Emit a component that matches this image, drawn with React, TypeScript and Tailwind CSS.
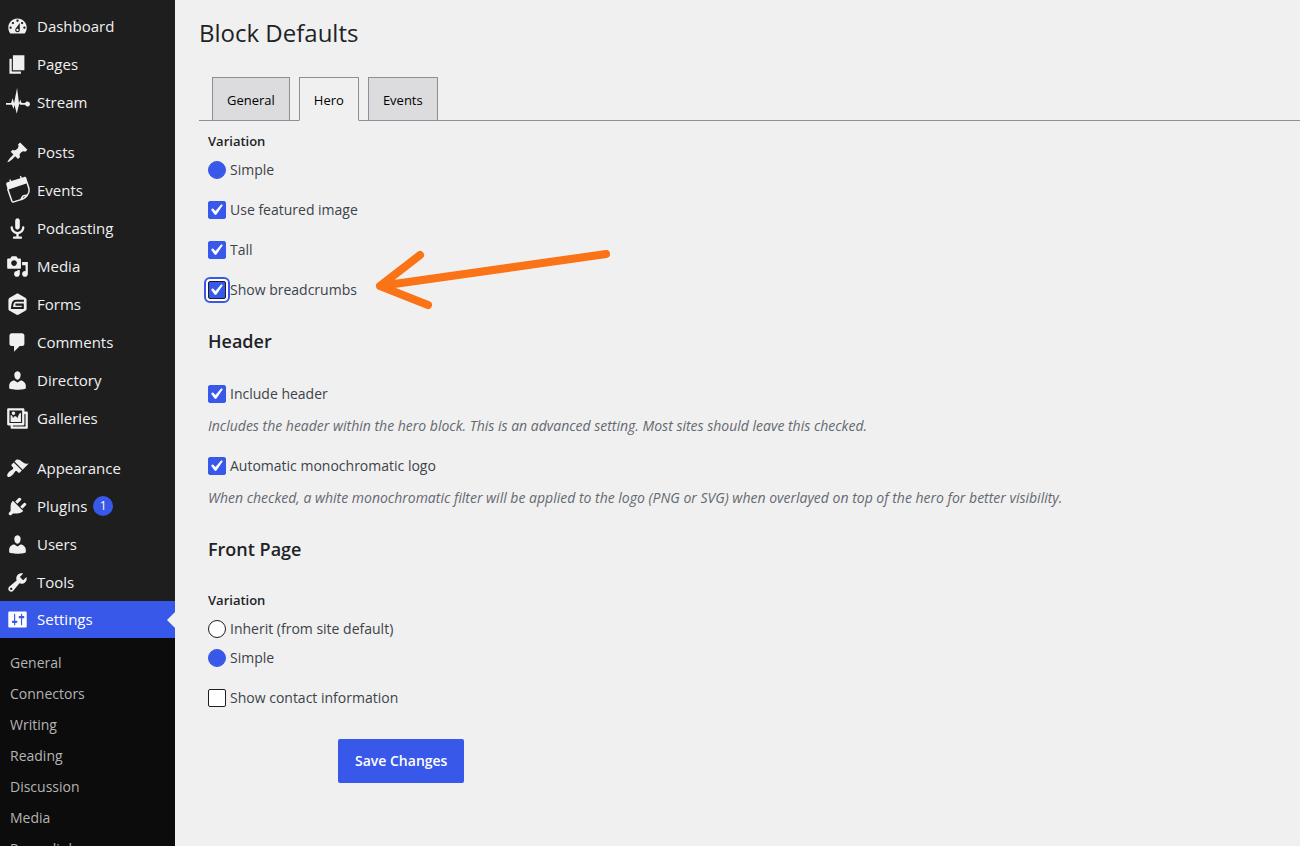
import { useId } from "react";
import clsx from "clsx";

interface MenuItem {
  label: string;
  icon: React.ReactNode;
  badge?: number;
  current?: boolean;
}

const glyph = (d: string) => <path fillRule="evenodd" d={d} />;

const usersGlyph = glyph(
  "M10 9.25c-2.27 0-2.73-3.44-2.73-3.44C7 4.02 7.82 2 9.97 2c2.16 0 2.98 2.02 2.71 3.81 0 0-.41 3.44-2.68 3.44zm0 2.57L12.72 10c2.39 0 4.52 2.33 4.52 4.53v2.49s-3.65 1.13-7.24 1.13c-3.65 0-7.24-1.13-7.24-1.13v-2.49c0-2.25 1.94-4.48 4.47-4.48z"
);

const menuGroups: MenuItem[][] = [
  [
    {
      label: "Dashboard",
      icon: glyph(
        "M3.76 16h12.48c1.1-1.37 1.76-3.11 1.76-5 0-4.42-3.58-8-8-8s-8 3.58-8 8c0 1.89.66 3.63 1.76 5zM10 4c.55 0 1 .45 1 1s-.45 1-1 1-1-.45-1-1 .45-1 1-1zM6 6c.55 0 1 .45 1 1s-.45 1-1 1-1-.45-1-1 .45-1 1-1zm8 0c.55 0 1 .45 1 1s-.45 1-1 1-1-.45-1-1 .45-1 1-1zm-5.37 5.55L12 7v6c0 1.1-.9 2-2 2s-2-.9-2-2c0-.57.24-1.08.63-1.45zM4 10c.55 0 1 .45 1 1s-.45 1-1 1-1-.45-1-1 .45-1 1-1zm12 0c.55 0 1 .45 1 1s-.45 1-1 1-1-.45-1-1 .45-1 1-1zm-5 3c0-.55-.45-1-1-1s-1 .45-1 1 .45 1 1 1 1-.45 1-1z"
      ),
    },
    { label: "Pages", icon: glyph("M6 15V2h10v13H6zm-1 1h8v2H3V5h2v11z") },
    {
      label: "Stream",
      icon: (
        <path d="M0 10.5h4.4l1.4-4.3 1.2 4.4L9.6-2.6l1.7 13.2 1.1-3 1.2 2.9h3a2.2 2.2 0 1 1 0 1.5h-4.2l-.8-1.2-1.2 4.6-1 4.4-2-7.600-.9 3.400-1.300-3.600H0z" />
      ),
    },
  ],
  [
    {
      label: "Posts",
      icon: glyph(
        "M10.44 3.02l1.82-1.82 6.36 6.35-1.83 1.82c-1.05-.68-2.48-.57-3.41.36l-.75.75c-.92.93-1.04 2.35-.35 3.41l-1.83 1.82-2.41-2.41-2.8 2.79c-.42.42-3.38 2.71-3.8 2.29s1.86-3.39 2.28-3.81l2.79-2.79L4.1 9.36l1.83-1.82c1.05.69 2.48.57 3.4-.36l.75-.75c.93-.92 1.05-2.35.36-3.41z"
      ),
    },
    {
      label: "Events",
      icon: (
        <>
          <path d="M.2 4.8C0 3.9.5 3.2 1.3 2.9l2-.7L2.8.6l1-.4.7 1.6 8-2.5-.5-1.8 1.1-.3.6 1.7 2.2-.7c.8-.2 1.5.2 1.8 1L19 3.5 1.6 9.4z" />
          <path
            d="M1.4 8.5L5 19c.3.9 1 1.2 1.8.9l6-1.9c1.3-1.7 1-2.6 2.2-3.3 1-.6 2.4-.2 3.7-.9 1.2-1.400 1.600-3.700 1.300-5.300L18.300 3M12.800 18c2.800-.9 4.800-2 5.900-4.200"
            fill="none"
            stroke="currentColor"
            strokeWidth="1.300"
          />
        </>
      ),
    },
    {
      label: "Podcasting",
      icon: glyph(
        "M12 9V3c0-1.1-.89-2-2-2-1.12 0-2 .94-2 2v6c0 1.1.9 2 2 2 1.13 0 2-.94 2-2zm4 0c0 2.97-2.16 5.43-5 5.91V17h2c.56 0 1 .45 1 1s-.44 1-1 1H7c-.55 0-1-.45-1-1s.45-1 1-1h2v-2.09C6.17 14.43 4 11.97 4 9c0-.55.45-1 1-1 .56 0 1 .45 1 1 0 2.21 1.8 4 4 4 2.21 0 4-1.79 4-4 0-.55.45-1 1-1 .56 0 1 .45 1 1z"
      ),
    },
    {
      label: "Media",
      icon: glyph(
        "M13 11V4c0-.55-.45-1-1-1h-1.67L9 1H5L3.67 3H2c-.55 0-1 .45-1 1v7c0 .55.45 1 1 1h10c.55 0 1-.45 1-1zM7 4.5c1.38 0 2.5 1.12 2.5 2.5S8.38 9.5 7 9.5 4.5 8.38 4.5 7 5.62 4.5 7 4.5zM14 6h5v10.5c0 1.38-1.12 2.5-2.5 2.5S14 17.88 14 16.5s1.12-2.5 2.5-2.5c.17 0 .34.02.5.05V9h-3V6zm-4 8.05V13h2v3.5c0 1.38-1.12 2.5-2.5 2.5S7 17.88 7 16.5 8.12 14 9.5 14c.17 0 .34.02.5.05z"
      ),
    },
    {
      label: "Forms",
      icon: (
        <>
          <path d="M8.9.8c.7-.4 1.5-.4 2.2 0l5.700 3.300c.7.4 1.100 1.100 1.100 1.900v7.600c0 .8-.4 1.500-1.100 1.900l-5.700 3.300c-.7.4-1.500.4-2.200 0l-5.700-3.300c-.7-.4-1.100-1.100-1.100-1.900V6c0-.8.4-1.500 1.100-1.900z" />
          <path d="M15.6 6.8H8.4c-2 0-3 2.6-3.2 6.3h9.4v-3H8.2" fill="none" stroke="#1e1e1e" strokeWidth="1.8" />
        </>
      ),
    },
    {
      label: "Comments",
      icon: glyph("M5 2h9c1.1 0 2 .9 2 2v7c0 1.1-.9 2-2 2h-2l-5 5v-5H5c-1.1 0-2-.9-2-2V4c0-1.1.9-2 2-2z"),
    },
    { label: "Directory", icon: usersGlyph },
    {
      label: "Galleries",
      icon: glyph(
        "M16 4h1.96c.57 0 1.04.47 1.04 1.04v12.92c0 .57-.47 1.04-1.04 1.04H5.04C4.47 19 4 18.53 4 17.96V16H2.04C1.47 16 1 15.53 1 14.96V2.04C1 1.47 1.47 1 2.04 1h12.92c.57 0 1.04.47 1.04 1.04V4zM3 14h11V3H3v11zm5-8.5C8 4.67 7.33 4 6.5 4S5 4.67 5 5.5 5.67 7 6.5 7 8 6.33 8 5.5zm2 4.5s1-5 3-5v8H4V7c2 0 2 3 2 3s.33-2 2-2 2 2 2 2zm7 7V6h-1v8.96c0 .57-.47 1.04-1.04 1.04H6v1h11z"
      ),
    },
  ],
  [
    {
      label: "Appearance",
      icon: glyph(
        "M14.48 11.06L7.41 3.99l1.5-1.5c.5-.56 2.3-.47 3.51.32 1.21.8 1.43 1.28 2.91 2.1 1.18.64 2.45 1.26 4.45.85zm-.71.71L6.7 4.7 4.93 6.47c-.39.39-.39 1.02 0 1.41l1.06 1.06c.39.39.39 1.03 0 1.42-.6.6-1.43 1.11-2.21 1.69-.35.26-.7.53-1.01.84C1.43 14.23.4 16.08 1.4 17.07c.99 1 2.84-.03 4.18-1.36.31-.31.58-.66.85-1.02.57-.78 1.08-1.61 1.69-2.21.39-.39 1.02-.39 1.41 0l1.06 1.06c.39.39 1.02.39 1.41 0z"
      ),
    },
    {
      label: "Plugins",
      badge: 1,
      icon: glyph(
        "M13.11 4.36L9.87 7.6 8 5.73l3.24-3.24c.35-.34 1.05-.2 1.56.32.52.51.66 1.21.31 1.55zm-8 1.77l.91-1.12 9.01 9.01-1.19.84c-.71.71-2.63 1.16-3.82 1.16H6.14L4.9 17.26c-.59.59-1.54.59-2.12 0-.59-.58-.59-1.53 0-2.12l1.24-1.24v-3.88c0-1.13.4-3.19 1.09-3.89zm7.26 3.97l3.24-3.24c.34-.35 1.04-.21 1.55.31.52.51.66 1.21.31 1.55l-3.24 3.25z"
      ),
    },
    { label: "Users", icon: usersGlyph },
    {
      label: "Tools",
      icon: glyph(
        "M16.68 9.77c-1.34 1.34-3.3 1.67-4.95.99l-5.41 6.52c-.99.99-2.59.99-3.58 0s-.99-2.59 0-3.57l6.52-5.42c-.68-1.65-.35-3.61.99-4.95 1.28-1.28 3.12-1.62 4.72-1.06l-2.89 2.89 2.82 2.82 2.86-2.87c.53 1.58.18 3.39-1.08 4.65zM3.81 16.21c.4.39 1.04.39 1.43 0 .4-.4.4-1.04 0-1.43-.39-.4-1.03-.4-1.43 0-.39.39-.39 1.03 0 1.43z"
      ),
    },
    {
      label: "Settings",
      current: true,
      icon: glyph(
        "M18 16V4c0-.55-.45-1-1-1H3c-.55 0-1 .45-1 1v12c0 .55.45 1 1 1h14c.55 0 1-.45 1-1zM8 11h1c.55 0 1 .45 1 1s-.45 1-1 1H8v1.5c0 .28-.22.5-.5.5s-.5-.22-.5-.5V13H6c-.55 0-1-.45-1-1s.45-1 1-1h1V5.5c0-.28.22-.5.5-.5s.5.22.5.5V11zm5-2h-1c-.55 0-1-.45-1-1s.45-1 1-1h1V5.5c0-.28.22-.5.5-.5s.5.22.5.5V7h1c.55 0 1 .45 1 1s-.45 1-1 1h-1v5.5c0 .28-.22.5-.5.5s-.5-.22-.5-.5V9z"
      ),
    },
  ],
];

const settingsPages = [
  "General",
  "Connectors",
  "Writing",
  "Reading",
  "Discussion",
  "Media",
  "Permalinks",
];

const tabs = ["General", "Hero", "Events"];

function Sidebar() {
  return (
    <nav className="w-[175px] shrink-0 bg-[#1e1e1e] pt-[7px]">
      <div className="flex flex-col gap-3">
        {menuGroups.map((group) => (
          <ul key={group[0].label}>
            {group.map((item) => (
              <li key={item.label}>
                <a
                  href="#"
                  className={clsx(
                    "relative flex items-center gap-2 pl-[6px] text-[15px]",
                    item.current ? "h-[37px] bg-[#3858e9] text-white" : "h-[38px] text-[#f0f0f1]"
                  )}
                >
                  <svg viewBox="0 0 20 20" className="size-[23px] overflow-visible" fill="currentColor" aria-hidden="true">
                    {item.icon}
                  </svg>
                  {item.label}
                  {item.badge && (
                    <span className="-ml-[2px] flex size-5 items-center justify-center rounded-full bg-[#3858e9] text-xs text-white">
                      {item.badge}
                    </span>
                  )}
                  {item.current && (
                    <span className="absolute right-0 border-y-8 border-r-8 border-y-transparent border-r-[#f0f0f0]" />
                  )}
                </a>
              </li>
            ))}
          </ul>
        ))}
      </div>
      <ul className="bg-[#0c0c0c] pt-[9px] pb-3">
        {settingsPages.map((page) => (
          <li key={page}>
            <a href="#" className="flex h-[31px] items-center pl-[10px] text-sm text-[#b4b4b4]">
              {page}
            </a>
          </li>
        ))}
      </ul>
    </nav>
  );
}

interface CheckboxFieldProps {
  label: string;
  checked?: boolean;
  focused?: boolean;
}

function CheckboxField({ label, checked, focused }: CheckboxFieldProps) {
  const id = useId();

  return (
    <div className="flex h-5 items-center gap-1">
      <span className="grid size-[18px] place-items-center">
        <input
          id={id}
          type="checkbox"
          defaultChecked={checked}
          autoFocus={focused}
          className="peer col-start-1 row-start-1 size-[18px] appearance-none rounded-xs border border-[#1e1e1e] bg-white checked:border-[#3858e9] checked:bg-[#3858e9] focus:border-[#1e1e1e] focus:ring-2 focus:ring-white focus:outline-2 focus:outline-offset-2 focus:outline-[#3858e9]"
        />
        <svg
          viewBox="3 2 16 16"
          className="pointer-events-none invisible col-start-1 row-start-1 size-[18px] peer-checked:visible"
          fill="white"
          aria-hidden="true"
        >
          <path d="M14.83 4.89l1.34.94-5.81 8.38H9.02L5.78 9.67l1.34-1.25 2.57 2.4z" />
        </svg>
      </span>
      <label htmlFor={id}>{label}</label>
    </div>
  );
}

function RadioField({ label, name, checked }: { label: string; name: string; checked?: boolean }) {
  const id = useId();

  return (
    <div className="flex h-5 items-center gap-1">
      <input
        id={id}
        type="radio"
        name={name}
        defaultChecked={checked}
        className="size-[18px] appearance-none rounded-full border border-[#1e1e1e] bg-white checked:border-[#3858e9] checked:bg-[#3858e9]"
      />
      <label htmlFor={id}>{label}</label>
    </div>
  );
}

function Arrow() {
  return (
    <svg
      viewBox="0 0 240 60"
      className="pointer-events-none absolute bottom-[-10px] left-[167px] h-[60px] w-[240px]"
      fill="none"
      stroke="#fb7317"
      strokeWidth="8"
      strokeLinecap="round"
      strokeLinejoin="round"
      aria-hidden="true"
    >
      <path d="M231 4L5 36M45 5L5 36l48 19" />
    </svg>
  );
}

export default function App() {
  return (
    <div className="flex h-screen overflow-hidden bg-[#f0f0f0] font-['Open_Sans','Noto_Sans',sans-serif]">
      <Sidebar />
      <main className="min-w-0 flex-1 pl-6">
        <h1 className="pt-[17px] text-2xl leading-8 text-[#1d2327]">Block Defaults</h1>

        <nav className="mt-7 flex gap-[9px] border-b border-[#8c8f94] pl-[13px]">
          {tabs.map((tab) => (
            <a
              key={tab}
              href="#"
              className={clsx(
                "-mb-px flex h-11 items-center border border-[#8c8f94] px-[14px] pt-[3px] text-[13px] text-black",
                tab === "Hero" ? "border-b-[#f0f0f0] bg-[#f0f0f0]" : "bg-[#dcdcde]"
              )}
            >
              {tab}
            </a>
          ))}
        </nav>

        <form className="pt-[10px] pl-[9px] text-sm leading-5 text-[#3c434a]">
          <fieldset className="flex flex-col gap-[9px]">
            <legend className="mb-[9px] text-[13px] leading-5 font-semibold text-[#1d2327]">Variation</legend>
            <RadioField name="variation" label="Simple" checked />
          </fieldset>
          <div className="relative mt-5 flex flex-col gap-5">
            <CheckboxField label="Use featured image" checked />
            <CheckboxField label="Tall" checked />
            <CheckboxField label="Show breadcrumbs" checked focused />
            <Arrow />
          </div>

          <h2 className="mt-[29px] mb-[31px] text-lg leading-6 font-semibold text-[#1d2327]">Header</h2>
          <CheckboxField label="Include header" checked />
          <p className="mt-3 text-[#646970] italic">
            Includes the header within the hero block. This is an advanced setting. Most sites should leave this checked.
          </p>
          <div className="mt-5">
            <CheckboxField label="Automatic monochromatic logo" checked />
          </div>
          <p className="mt-3 text-[#646970] italic">
            When checked, a white monochromatic filter will be applied to the logo (PNG or SVG) when overlayed on top of
            the hero for better visibility.
          </p>

          <h2 className="mt-[29px] mb-[29px] text-lg leading-6 font-semibold text-[#1d2327]">Front Page</h2>
          <fieldset className="flex flex-col gap-[9px]">
            <legend className="mb-[9px] text-[13px] leading-5 font-semibold text-[#1d2327]">Variation</legend>
            <RadioField name="front-variation" label="Inherit (from site default)" />
            <RadioField name="front-variation" label="Simple" checked />
          </fieldset>
          <div className="mt-5">
            <CheckboxField label="Show contact information" />
          </div>

          <button
            type="submit"
            className="mt-[31px] ml-[130px] h-11 rounded-xs bg-[#3858e9] px-[17px] font-semibold text-white"
          >
            Save Changes
          </button>
        </form>
      </main>
    </div>
  );
}
